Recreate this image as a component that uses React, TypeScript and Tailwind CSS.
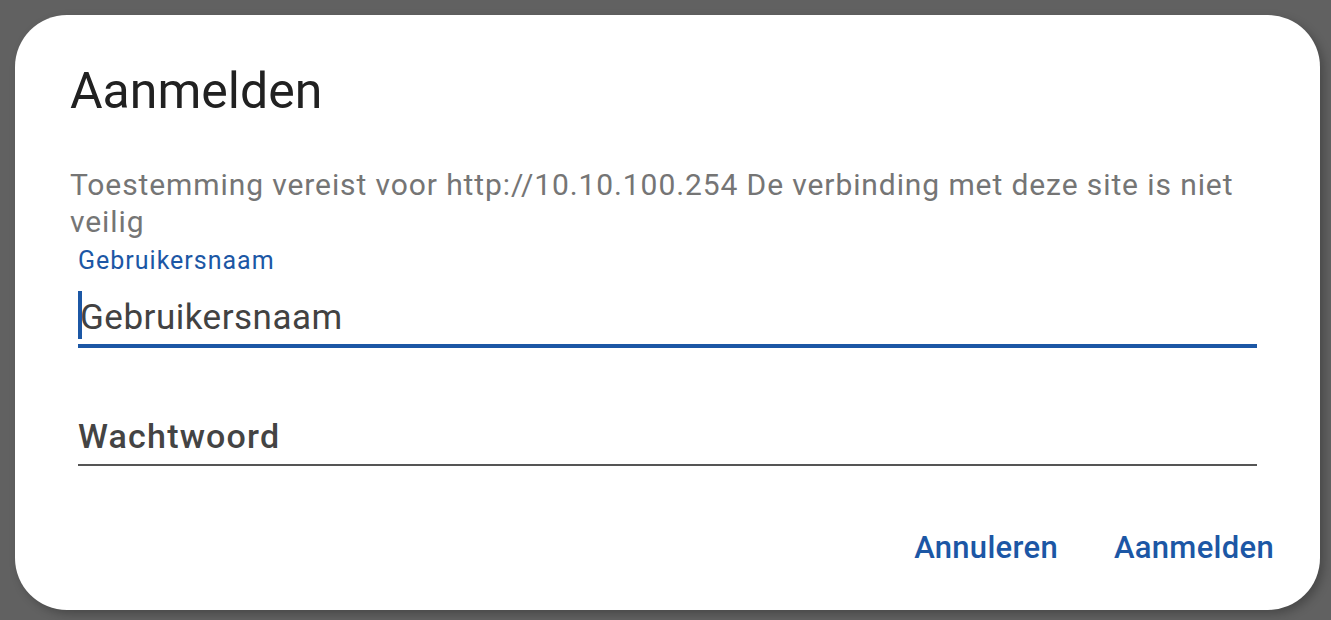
import React from "react";

export default function App() {
  return (
    <div className="w-[1331px] h-[620px] bg-[#616161] pt-[15px] pl-[15px]" style={{ fontFamily: "Roboto, 'Noto Sans', sans-serif" }}>
      <div className="w-[1305px] h-[595px] bg-white rounded-[52px] pt-[47px] pl-[55px] pr-[55px] flex flex-col shadow-[4px_4px_10px_rgba(0,0,0,0.25)]">
        <h1 className="text-[50px] leading-[58px] text-[#212121] font-normal">Aanmelden</h1>
        <p className="mt-[46px] text-[30px] leading-[37px] tracking-[0.9px] text-[#757575]">
          Toestemming vereist voor http://10.10.100.254 De verbinding met deze site is niet veilig
        </p>
        <div className="pl-[8px] pr-[8px]">
          <div className="mt-[7px] text-[25px] leading-[28px] tracking-[1px] text-[#1c57a5]">Gebruikersnaam</div>
          <div className="relative mt-[19px] border-b-[4px] border-[#1c57a5] pb-[2px]">
            <div className="absolute left-0 top-[-3px] w-[4px] h-[48px] bg-[#1c57a5]" />
            <div className="text-[35px] leading-[48px] tracking-[0.5px] text-[#424242] pl-[2px]">Gebruikersnaam</div>
          </div>
          <div className="mt-[68px] border-b-[2px] border-[#555555] pb-[8px]">
            <div className="text-[34px] leading-[40px] text-[#444444] font-medium tracking-[1.2px]">Wachtwoord</div>
          </div>
        </div>
        <div className="flex justify-end gap-[56px] mt-[64px] mr-[-9px]">
          <button className="text-[31px] leading-[36px] font-medium tracking-[0.3px] text-[#1c57a5]">Annuleren</button>
          <button className="text-[31px] leading-[36px] font-medium tracking-[0.3px] text-[#1c57a5]">Aanmelden</button>
        </div>
      </div>
    </div>
  );
}
